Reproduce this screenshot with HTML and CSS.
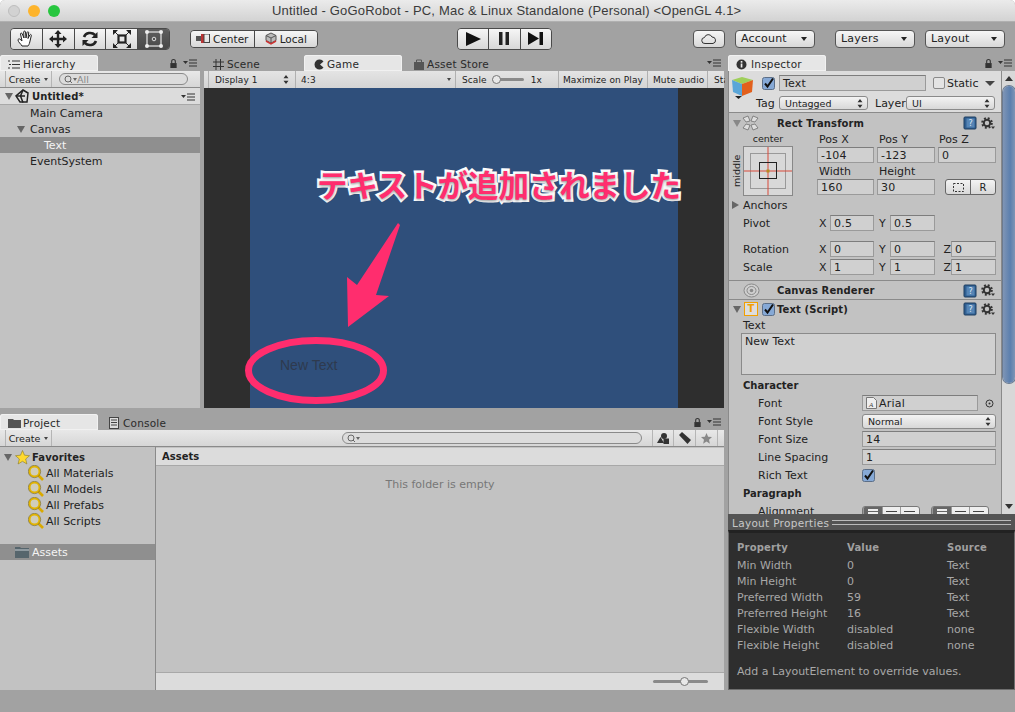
FILE: index.html
```html
<!DOCTYPE html>
<html lang="en">

<head>
    <meta charset="UTF-8">
    <title>Untitled - GoGoRobot</title>
    <link rel="stylesheet" href="styles.css">
</head>

<body>
    <svg class="defs" width="0" height="0">
        <symbol id="lock" viewBox="0 0 10 11"><path d="M3 5V3a2 2 0 0 1 4 0v2" fill="none" stroke="#333" stroke-width="1.2"/><rect x="1.5" y="5" width="7" height="5.5" fill="#333"/></symbol>
        <symbol id="menu" viewBox="0 0 14 8"><path d="M0 2h5L2.500 5z" fill="#333"/><path d="M6 1h8M6 4h8M6 7h8" stroke="#333" stroke-width="1.100"/></symbol>
        <symbol id="help" viewBox="0 0 14 14"><rect x="1" y="1" width="12" height="12" rx="1" fill="#2f5f92" stroke="#1f3f60"/><rect x="3.500" y="2.500" width="8" height="9" fill="#5685b5"/><text x="7.500" y="10" font-size="8" fill="#dce9f5" text-anchor="middle" font-family="DejaVu Sans">?</text></symbol>
        <symbol id="gear" viewBox="0 0 14 13"><circle cx="6" cy="6" r="3.200" fill="none" stroke="#333" stroke-width="2"/><circle cx="6" cy="6" r="4.800" fill="none" stroke="#333" stroke-width="2" stroke-dasharray="1.900 1.900"/><path d="M10 9.500h4l-2 2.500z" fill="#333"/></symbol>
        <symbol id="zoom" viewBox="0 0 16 16"><circle cx="6.500" cy="6.500" r="5" fill="#f3e9a8" fill-opacity=".3" stroke="#e2b400" stroke-width="2"/><path d="M10.500 10.500l4.500 4.500" stroke="#d9a900" stroke-width="2.600"/><circle cx="6.500" cy="6.500" r="6.200" fill="none" stroke="#6b5a10" stroke-width=".5"/></symbol>
        <symbol id="check" viewBox="0 0 13 13"><rect x=".5" y=".5" width="12" height="12" rx="2" fill="#86a9d6" stroke="#5c6f88"/><path d="M3 6.500l2.500 3L11 1.500" fill="none" stroke="#111" stroke-width="2"/></symbol>
        <symbol id="updown" viewBox="0 0 6 9"><path d="M3 0l2.500 3.200h-5zM3 9l2.500-3.200h-5z" fill="#333"/></symbol>
    </svg>

    <div class="window">
        <header class="titlebar">
            <div class="lights">
                <span class="light light-off"></span>
                <span class="light light-min"></span>
                <span class="light light-max"></span>
            </div>
            <div class="title">Untitled - GoGoRobot - PC, Mac &amp; Linux Standalone (Personal) &lt;OpenGL 4.1&gt;</div>
        </header>

        <div class="toolbar">
            <div class="btn-group tools">
                <button class="tool"><svg width="20" height="20" viewBox="0 0 20 20"><path d="M6 17c-1-2-4-4-4-6 0-1 1-1.500 2-.8l2 1.800L4.500 5c0-1.200 1.500-1.200 1.800 0L8 9l-.3-6c0-1.200 1.700-1.200 1.800 0l.5 6 1-5.500c.3-1.100 1.800-.9 1.700.3L12 9.500l1.800-3.500c.5-1 1.900-.5 1.500.6L13.800 13c-.5 2-1 3-1.800 4z" fill="#fff" stroke="#222" stroke-width="1"/></svg></button>
                <button class="tool"><svg width="20" height="20" viewBox="0 0 20 20"><path d="M10 1l3.500 4h-2.300v3.800H15V6.500l4 3.500-4 3.500v-2.300h-3.800V15h2.300L10 19l-3.500-4h2.300v-3.800H5v2.300L1 10l4-3.500v2.300h3.800V5H6.500z" fill="#222"/></svg></button>
                <button class="tool"><svg width="20" height="20" viewBox="0 0 20 20"><path d="M4 8a6.500 6 0 0 1 11-2" fill="none" stroke="#222" stroke-width="2.600"/><path d="M17.500 3v6h-6z" fill="#222"/><path d="M16 12a6.500 6 0 0 1-11 2" fill="none" stroke="#222" stroke-width="2.600"/><path d="M2.500 17v-6h6z" fill="#222"/></svg></button>
                <button class="tool"><svg width="20" height="20" viewBox="0 0 20 20"><rect x="6.500" y="6.500" width="7" height="7" fill="none" stroke="#222" stroke-width="2.200"/><path d="M1 1h5L1 6zM19 1v5l-5-5zM1 19v-5l5 5zM19 19h-5l5-5z" fill="#222"/><path d="M3 3l3 3M17 3l-3 3M3 17l3-3M17 17l-3-3" stroke="#222"/></svg></button>
                <button class="tool tool-on"><svg width="20" height="20" viewBox="0 0 20 20"><rect x="3" y="3" width="14" height="14" fill="none" stroke="#ddd" stroke-width="1.300"/><circle cx="3" cy="3" r="2" fill="#eee"/><circle cx="17" cy="3" r="2" fill="#eee"/><circle cx="3" cy="17" r="2" fill="#eee"/><circle cx="17" cy="17" r="2" fill="#eee"/><circle cx="10" cy="10" r="1.800" fill="none" stroke="#ddd"/></svg></button>
            </div>
            <div class="btn-group pivot">
                <button class="pivot-btn"><svg width="14" height="9" viewBox="0 0 14 9"><rect x="0" y="2" width="5" height="5" fill="#555"/><rect x="5" y="0" width="3" height="9" fill="#b33"/><rect x="8" y="0" width="5.500" height="8.500" fill="none" stroke="#444"/></svg>Center</button>
                <button class="pivot-btn"><svg width="12" height="13" viewBox="0 0 12 13"><path d="M6 1l5 2.500v5L6 11 1 8.500v-5z" fill="#bbb" stroke="#555"/><path d="M1 3.500L6 6l5-2.500M6 6v5" fill="none" stroke="#555"/><path d="M1 9l5 3 5-3" fill="none" stroke="#c33" stroke-width="1.500"/></svg>Local</button>
            </div>
            <div class="btn-group play">
                <button class="play-btn"><svg width="15" height="14" viewBox="0 0 15 14"><path d="M0 0l15 7-15 7z" fill="#111"/></svg></button>
                <button class="play-btn"><svg width="10" height="13" viewBox="0 0 10 13"><path d="M0 0h3.500v13H0zM6.500 0H10v13H6.500z" fill="#222"/></svg></button>
                <button class="play-btn"><svg width="15" height="13" viewBox="0 0 15 13"><path d="M0 0l11 6.500L0 13z" fill="#111"/><path d="M11.500 0H15v13h-3.500z" fill="#111"/></svg></button>
            </div>
            <button class="single cloud"><svg width="16" height="10" viewBox="0 0 16 10"><path d="M4 9.500a3 3 0 0 1-.5-6A4 4 0 0 1 11 3a3.300 3.300 0 0 1 1 6.500z" fill="none" stroke="#333"/></svg></button>
            <button class="single drop account">Account<i class="caret"></i></button>
            <button class="single drop layers">Layers<i class="caret"></i></button>
            <button class="single drop layout">Layout<i class="caret"></i></button>
        </div>

        <div class="workspace">
            <div class="left">
                <div class="top-row">
                    <section class="panel hierarchy">
                        <div class="tabs">
                            <div class="tab tab-on hier-tab"><svg width="12" height="9" viewBox="0 0 12 9"><path d="M0 1h2M4 1h8M1 4.500h2M4 4.500h8M0 8h2M4 8h8" stroke="#333"/></svg>Hierarchy</div>
                            <div class="tab-tools"><svg width="9" height="11"><use href="#lock"/></svg><svg width="14" height="8"><use href="#menu"/></svg></div>
                        </div>
                        <div class="panel-bar">
                            <div class="create">Create<i class="caret caret-small"></i></div>
                            <div class="search search-all"><svg width="13" height="9" viewBox="0 0 13 9"><circle cx="4" cy="4" r="3" fill="none" stroke="#666"/><path d="M6 6l2 2" stroke="#666"/><path d="M9 3h4l-2 3z" fill="#666"/></svg>All</div>
                        </div>
                        <div class="scene-head">
                            <i class="fold"></i>
                            <svg width="15" height="15" viewBox="0 0 15 15"><path d="M8 1l5 3-1 9-7 0-4-6z" fill="none" stroke="#222" stroke-width="1.500"/><path d="M1 7h9M8 1L5.500 7 8 13.500" fill="none" stroke="#222" stroke-width="1.500"/></svg>
                            <b>Untitled*</b>
                            <svg class="scene-menu" width="14" height="8"><use href="#menu"/></svg>
                        </div>
                        <div class="row row-1">Main Camera</div>
                        <div class="row row-0"><i class="fold"></i>Canvas</div>
                        <div class="row row-2 row-on">Text</div>
                        <div class="row row-1">EventSystem</div>
                    </section>

                    <section class="panel game">
                        <div class="tabs">
                            <div class="tab scene-tab"><svg width="11" height="11" viewBox="0 0 11 11"><path d="M3 0v11M7.500 0v11M0 3h11M0 7.500h11" stroke="#333"/></svg>Scene</div>
                            <div class="tab tab-on game-tab"><svg width="12" height="11" viewBox="0 0 12 11"><path d="M10.500 2.500a5 5 0 1 0 0 6L7 5.500z" fill="#333"/></svg>Game</div>
                            <div class="tab store-tab"><svg width="12" height="11" viewBox="0 0 12 11"><rect x="1" y="3" width="10" height="8" fill="#555"/><path d="M3.500 3V1h5v2" fill="none" stroke="#555"/></svg>Asset Store</div>
                            <div class="tab-tools"><svg width="14" height="8"><use href="#menu"/></svg></div>
                        </div>
                        <div class="panel-bar game-bar">
                            <div class="cell cell-display">Display 1<svg width="6" height="9"><use href="#updown"/></svg></div>
                            <div class="cell cell-ratio">4:3<i class="caret caret-small"></i></div>
                            <div class="cell cell-scale">Scale<span class="slider slider-scale"><i></i></span><span>1x</span></div>
                            <div class="cell cell-max">Maximize on Play</div>
                            <div class="cell cell-mute">Mute audio</div>
                            <div class="cell cell-stats">Stats</div>
                        </div>
                        <div class="game-view">
                            <div class="game-side"></div>
                            <div class="game-screen"></div>
                            <div class="game-side"></div>
                            <span class="new-text">New Text</span>
                            <svg class="annotation" width="520" height="320" viewBox="0 0 520 320">
                                <polygon points="144,239 143,189 153,197 194,135 196,137 172,207 185,208" fill="#ff2d6e"/>
                                <ellipse cx="112" cy="282.500" rx="67.500" ry="30" fill="none" stroke="#ff2d6e" stroke-width="7"/>
                            </svg>
                            <div class="callout">テキストが追加されました</div>
                        </div>
                    </section>
                </div>

                <section class="panel project">
                    <div class="tabs">
                        <div class="tab tab-on project-tab"><svg width="13" height="10" viewBox="0 0 13 10"><path d="M0 1h5l1 1h7v8H0z" fill="#555"/></svg>Project</div>
                        <div class="tab console-tab"><svg width="10" height="12" viewBox="0 0 10 12"><rect x=".5" y=".5" width="9" height="11" fill="#ddd" stroke="#444"/><path d="M2 3h6M2 5.500h6M2 8h6" stroke="#444"/></svg>Console</div>
                        <div class="tab-tools"><svg width="9" height="11"><use href="#lock"/></svg><svg width="14" height="8"><use href="#menu"/></svg></div>
                    </div>
                    <div class="panel-bar">
                        <div class="create">Create<i class="caret caret-small"></i></div>
                        <div class="search search-project"><svg width="13" height="9" viewBox="0 0 13 9"><circle cx="4" cy="4" r="3" fill="none" stroke="#666"/><path d="M6 6l2 2" stroke="#666"/><path d="M9 3h4l-2 3z" fill="#666"/></svg></div>
                        <div class="bar-icon"><svg width="12" height="11" viewBox="0 0 12 11"><path d="M0 10l3.500-6L7 10z" fill="#333"/><circle cx="7" cy="3" r="3" fill="#333"/><rect x="6.500" y="5.500" width="5.500" height="5.500" fill="#333"/></svg></div>
                        <div class="bar-icon"><svg width="12" height="12" viewBox="0 0 12 12"><path d="M0 3l3-3 9 8-3.500 4z" fill="#333"/></svg></div>
                        <div class="bar-icon"><svg width="11" height="11" viewBox="0 0 11 11"><path d="M5.500 0l1.600 3.700 3.900.4-3 2.600.9 4-3.400-2.100L2.100 10.700l.9-4-3-2.600 3.900-.4z" fill="#888"/></svg></div>
                    </div>
                    <div class="project-body">
                        <div class="tree">
                            <div class="row fav-row"><i class="fold"></i><svg width="15" height="15" viewBox="0 0 15 15"><path d="M7.500 .5l2 4.700 5 .5-3.800 3.300 1.200 5L7.500 11.300 3.100 14l1.200-5L.5 5.700l5-.5z" fill="#ffd92e" stroke="#8a7a20" stroke-width=".6"/></svg><b>Favorites</b></div>
                            <div class="row search-row"><svg width="16" height="16"><use href="#zoom"/></svg>All Materials</div>
                            <div class="row search-row"><svg width="16" height="16"><use href="#zoom"/></svg>All Models</div>
                            <div class="row search-row"><svg width="16" height="16"><use href="#zoom"/></svg>All Prefabs</div>
                            <div class="row search-row"><svg width="16" height="16"><use href="#zoom"/></svg>All Scripts</div>
                            <div class="row row-on assets-row"><svg width="14" height="12" viewBox="0 0 14 12"><path d="M0 1h5l1 1h8v10H0z" fill="#56656c"/><rect y="3.500" width="14" height="1" fill="#c8d0d4"/></svg>Assets</div>
                        </div>
                        <div class="browser">
                            <div class="browser-head">Assets</div>
                            <div class="browser-empty">This folder is empty</div>
                            <div class="browser-foot"><span class="slider slider-size"><i></i></span></div>
                        </div>
                    </div>
                </section>
            </div>

            <aside class="right">
                <section class="panel inspector">
                    <div class="tabs">
                        <div class="tab tab-on inspector-tab"><svg width="11" height="11" viewBox="0 0 11 11"><circle cx="5.500" cy="5.500" r="5" fill="#333"/><rect x="4.700" y="4.500" width="1.700" height="4" fill="#eee"/><rect x="4.700" y="2" width="1.700" height="1.700" fill="#eee"/></svg>Inspector</div>
                        <div class="tab-tools"><svg width="9" height="11"><use href="#lock"/></svg><svg width="14" height="8"><use href="#menu"/></svg></div>
                    </div>
                    <div class="inspector-body">
                        <div class="inspector-scroll">
                            <div class="object-head">
                                <div class="object-line">
                                    <svg class="cube" width="23" height="24" viewBox="0 0 23 24"><path d="M1 4l10-3 11 3-11 4z" fill="#9fcf5a"/><path d="M1 4l10 4v12L2 16z" fill="#5aa6d8"/><path d="M11 8l11-4-1 12-10 4z" fill="#e2601c"/><path d="M4 20h7l-3.500 3z" fill="#222"/></svg>
                                    <svg width="13" height="13"><use href="#check"/></svg>
                                    <div class="field name-field">Text</div>
                                    <i class="box"></i>
                                    <span class="static-label">Static</span>
                                    <i class="caret caret-big"></i>
                                </div>
                                <div class="object-line tag-line">
                                    <span class="tag-label">Tag</span>
                                    <div class="popup tag-popup">Untagged<svg width="6" height="9"><use href="#updown"/></svg></div>
                                    <span class="layer-label">Layer</span>
                                    <div class="popup layer-popup">UI<svg width="6" height="9"><use href="#updown"/></svg></div>
                                </div>
                            </div>

                            <div class="comp-head comp-rect">
                                <i class="fold fold-light"></i>
                                <svg class="comp-icon" width="17" height="16" viewBox="0 0 17 16"><path d="M1 3l5-2 2 5-4 1zM16 3l-5-2-2 5 4 1zM1 13l5 2 2-5-4-1zM16 13l-5 2-2-5 4-1z" fill="#dedede" stroke="#707070" stroke-width=".8"/></svg>
                                <b>Rect Transform</b>
                                <svg class="help" width="14" height="14"><use href="#help"/></svg>
                                <svg class="gear" width="14" height="13"><use href="#gear"/></svg>
                            </div>
                            <div class="rect-grid">
                                <div class="anchor-col">
                                    <div class="anchor-top">center</div>
                                    <div class="anchor-wrap">
                                        <span class="anchor-side">middle</span>
                                        <svg class="anchor-box" width="50" height="50" viewBox="0 0 50 50"><rect x=".5" y=".5" width="49" height="49" fill="#d8d8d8" stroke="#888"/><rect x="7.500" y="7.500" width="35" height="35" fill="none" stroke="#999"/><path d="M25 1v48M1 25h48" stroke="#d84a3a"/><rect x="16.500" y="16.500" width="17" height="16" fill="none" stroke="#222"/><rect x="23.500" y="23.500" width="3" height="3" fill="#b88a20"/></svg>
                                    </div>
                                </div>
                                <div class="pos-col">
                                    <div class="triple triple-head"><span>Pos X</span><span>Pos Y</span><span>Pos Z</span></div>
                                    <div class="triple"><div class="field">-104</div><div class="field">-123</div><div class="field">0</div></div>
                                    <div class="triple triple-head"><span>Width</span><span>Height</span></div>
                                    <div class="triple"><div class="field">160</div><div class="field">30</div>
                                        <div class="mini-btns"><span><svg width="11" height="9" viewBox="0 0 11 9"><rect x=".5" y=".5" width="10" height="8" fill="none" stroke="#333" stroke-dasharray="2 1.500"/></svg></span><span>R</span></div>
                                    </div>
                                </div>
                            </div>
                            <div class="prop prop-anchors"><i class="fold fold-closed"></i>Anchors</div>
                            <div class="prop prop-xyz"><span class="prop-name">Pivot</span><em>X</em><div class="field">0.5</div><em>Y</em><div class="field">0.5</div></div>
                            <div class="prop prop-xyz prop-gap"><span class="prop-name">Rotation</span><em>X</em><div class="field">0</div><em>Y</em><div class="field">0</div><em>Z</em><div class="field">0</div></div>
                            <div class="prop prop-xyz"><span class="prop-name">Scale</span><em>X</em><div class="field">1</div><em>Y</em><div class="field">1</div><em>Z</em><div class="field">1</div></div>

                            <div class="comp-head comp-canvas">
                                <svg class="comp-icon" width="17" height="15" viewBox="0 0 17 15"><ellipse cx="8.500" cy="7.500" rx="7.500" ry="6.500" fill="#cfcfcf" stroke="#8a8a8a"/><ellipse cx="8.500" cy="7.500" rx="4.500" ry="4" fill="none" stroke="#8a8a8a"/><circle cx="8.500" cy="7.500" r="1.800" fill="#8a8a8a"/></svg>
                                <b>Canvas Renderer</b>
                                <svg class="help" width="14" height="14"><use href="#help"/></svg>
                                <svg class="gear" width="14" height="13"><use href="#gear"/></svg>
                            </div>
                            <div class="comp-head comp-text">
                                <i class="fold"></i>
                                <span class="t-icon">T</span>
                                <svg width="13" height="13"><use href="#check"/></svg>
                                <b>Text (Script)</b>
                                <svg class="help" width="14" height="14"><use href="#help"/></svg>
                                <svg class="gear" width="14" height="13"><use href="#gear"/></svg>
                            </div>
                            <div class="prop text-label">Text</div>
                            <div class="text-area">New Text</div>
                            <div class="prop group-label">Character</div>
                            <div class="prop sub"><span class="sub-name">Font</span><div class="field font-field"><svg width="11" height="12" viewBox="0 0 11 12"><path d="M.5.500h7l3 3v8H.5z" fill="#eee" stroke="#777"/><text x="3" y="10" font-size="7" font-style="italic" font-family="Liberation Serif" fill="#444">A</text></svg>Arial</div><svg class="picker" width="9" height="9" viewBox="0 0 9 9"><circle cx="4.500" cy="4.500" r="3.500" fill="none" stroke="#333"/><circle cx="4.500" cy="4.500" r="1" fill="#333"/></svg></div>
                            <div class="prop sub"><span class="sub-name">Font Style</span><div class="popup style-popup">Normal<svg width="6" height="9"><use href="#updown"/></svg></div></div>
                            <div class="prop sub"><span class="sub-name">Font Size</span><div class="field wide-field">14</div></div>
                            <div class="prop sub"><span class="sub-name">Line Spacing</span><div class="field wide-field">1</div></div>
                            <div class="prop sub"><span class="sub-name">Rich Text</span><svg width="13" height="13"><use href="#check"/></svg></div>
                            <div class="prop group-label group-para">Paragraph</div>
                            <div class="prop sub"><span class="sub-name">Alignment</span>
                                <div class="align-group"><span class="align-on"></span><span></span><span></span></div>
                                <div class="align-group align-second"><span class="align-on"></span><span></span><span></span></div>
                            </div>
                        </div>
                        <div class="scrollbar">
                            <i class="scroll-up"></i>
                            <div class="scroll-thumb"></div>
                            <i class="scroll-down"></i>
                        </div>
                    </div>
                    <div class="layout-head"><span>Layout Properties</span><i></i></div>
                    <div class="layout-body">
                        <div class="layout-row layout-title"><span>Property</span><span>Value</span><span>Source</span></div>
                        <div class="layout-row"><span>Min Width</span><span>0</span><span>Text</span></div>
                        <div class="layout-row"><span>Min Height</span><span>0</span><span>Text</span></div>
                        <div class="layout-row"><span>Preferred Width</span><span>59</span><span>Text</span></div>
                        <div class="layout-row"><span>Preferred Height</span><span>16</span><span>Text</span></div>
                        <div class="layout-row"><span>Flexible Width</span><span>disabled</span><span>none</span></div>
                        <div class="layout-row"><span>Flexible Height</span><span>disabled</span><span>none</span></div>
                        <p class="layout-note">Add a LayoutElement to override values.</p>
                    </div>
                </section>
            </aside>
        </div>
        <div class="statusbar"></div>
    </div>
</body>

</html>
```
FILE: styles.css
```css
* {
    box-sizing: border-box;
}

body {
    margin: 0;
    background: #fff;
    font-family: "DejaVu Sans", sans-serif;
    font-size: 11px;
    color: #222;
    overflow: hidden;
}

.defs {
    position: absolute;
}

i, em {
    font-style: normal;
}

b {
    font-size: 10px;
    letter-spacing: .1px;
}

button {
    font-family: inherit;
    padding: 0;
}

.window {
    width: 1015px;
    height: 712px;
    background: #a2a2a2;
    border-radius: 5px 5px 0 0;
    overflow: hidden;
}

/* title bar */
.titlebar {
    height: 22px;
    display: flex;
    align-items: center;
    background: linear-gradient(#ebebeb, #d3d3d3);
    border-bottom: 1px solid #b0b0b0;
}

.lights {
    display: flex;
    gap: 8px;
    padding-left: 8px;
    width: 272px;
}

.light {
    width: 12px;
    height: 12px;
    border-radius: 50%;
}

.light-off {
    background: #d2d2d2;
    border: 1px solid #bdbdbd;
}

.light-min {
    background: #fdb42c;
}

.light-max {
    background: #27c63f;
}

.title {
    font-family: "Liberation Sans", sans-serif;
    font-size: 13px;
    color: #3a3a3a;
    white-space: nowrap;
    letter-spacing: .19px;
}

/* main toolbar */
.toolbar {
    height: 32px;
    display: flex;
    align-items: center;
    padding: 1px 0 0 10px;
}

.btn-group {
    display: flex;
    border: 1px solid #4a4a4a;
    border-radius: 4px;
    overflow: hidden;
    flex: none;
}

.btn-group button,
.single {
    border: 0;
    background: linear-gradient(#f6f6f6, #d8d8d8);
    display: flex;
    align-items: center;
    justify-content: center;
    color: #222;
}

.btn-group button {
    flex: 1;
    min-width: 0;
}

.btn-group button + button {
    border-left: 1px solid #4a4a4a;
}

.tools {
    width: 160px;
    height: 22px;
}

.btn-group .tool-on {
    background: linear-gradient(#5f5f5f, #484848);
}

.pivot {
    width: 128px;
    height: 18px;
    margin-left: 20px;
}

.pivot-btn {
    gap: 3px;
    font-size: 10.500px;
}

.play {
    width: 95px;
    height: 22px;
    margin-left: 139px;
}

.single {
    height: 18px;
    border: 1px solid #555;
    border-radius: 4px;
    font-size: 11px;
    flex: none;
}

.cloud {
    width: 32px;
    margin-left: 141px;
}

.drop {
    width: 80px;
    justify-content: space-between;
    padding: 0 7px 0 5px;
    letter-spacing: .2px;
}

.account {
    margin-left: 10px;
}

.layers {
    margin-left: 20px;
}

.layout {
    margin-left: 10px;
}

.caret {
    width: 0;
    height: 0;
    border-left: 3px solid transparent;
    border-right: 3px solid transparent;
    border-top: 4px solid #222;
}

.caret-small {
    border-left-width: 2px;
    border-right-width: 2px;
    border-top-width: 3px;
    border-top-color: #444;
}

.caret-big {
    border-left-width: 5px;
    border-right-width: 5px;
    border-top-width: 5px;
    border-top-color: #444;
}

/* docked panels */
.workspace {
    height: 636px;
    display: flex;
    gap: 4px;
}

.left {
    width: 724px;
    display: flex;
    flex-direction: column;
    gap: 5px;
}

.top-row {
    height: 354px;
    display: flex;
    gap: 4px;
}

.panel {
    display: flex;
    flex-direction: column;
    min-width: 0;
}

.hierarchy {
    width: 200px;
    background: #c2c2c2;
}

.game {
    width: 520px;
}

.project {
    height: 277px;
}

.right {
    width: 287px;
}

.tabs {
    height: 17px;
    flex: none;
    display: flex;
    align-items: flex-end;
    background: #a2a2a2;
    position: relative;
}

.tab {
    height: 16px;
    width: 98px;
    display: flex;
    align-items: center;
    gap: 4px;
    padding: 2px 0 0 8px;
    font-size: 10.500px;
    letter-spacing: .2px;
    color: #2a2a2a;
}

.tab-on {
    background: #e6e6e6;
    border-radius: 3px 3px 0 0;
    box-shadow: inset 0 0 0 1px #f1f1f1;
}

.tab-tools {
    margin-left: auto;
    height: 16px;
    display: flex;
    align-items: center;
    gap: 5px;
    padding-right: 3px;
}

.hier-tab {
    gap: 3px;
}

.project-tab {
    gap: 2px;
}

.scene-tab {
    margin-left: 5px;
    width: 95px;
    padding-left: 4px;
    gap: 3px;
}

.game-tab {
    padding-left: 9px;
    gap: 2px;
}

.store-tab {
    margin-left: 3px;
    width: 90px;
    gap: 2px;
}

.console-tab {
    margin-left: 3px;
}

.panel-bar {
    height: 17px;
    flex: none;
    display: flex;
    align-items: center;
    background: linear-gradient(#e8e8e8, #d6d6d6);
    border-bottom: 1px solid #8a8a8a;
    font-size: 9.500px;
}

.create {
    width: 47px;
    height: 100%;
    margin-left: 5px;
    border-left: 1px solid #b5b5b5;
    border-right: 1px solid #b5b5b5;
    display: flex;
    align-items: center;
    justify-content: center;
    gap: 4px;
}

.search {
    height: 12px;
    border: 1px solid #8a8a8a;
    border-radius: 7px;
    background: #dcdcdc;
    display: flex;
    align-items: center;
    color: #888;
    padding-left: 4px;
}

.search-all {
    width: 129px;
    margin-left: 7px;
}

.search-project {
    width: 300px;
    margin-left: 290px;
}

.bar-icon {
    width: 22px;
    height: 100%;
    border-right: 1px solid #b5b5b5;
    display: flex;
    align-items: center;
    justify-content: center;
}

.bar-icon:nth-child(3) {
    margin-left: 10px;
    border-left: 1px solid #b5b5b5;
}

.scene-head {
    height: 17px;
    display: flex;
    align-items: center;
    background: #dcdcdc;
    border-bottom: 1px solid #a8a8a8;
    padding: 1px 0 0 5px;
    gap: 2px;
}

.scene-menu {
    margin-left: auto;
    margin-right: 5px;
}

.fold {
    width: 0;
    height: 0;
    border-left: 4px solid transparent;
    border-right: 4px solid transparent;
    border-top: 7px solid #666;
}

.fold-light {
    border-top-color: #888;
}

.fold-closed {
    border-top: 4px solid transparent;
    border-bottom: 4px solid transparent;
    border-left: 7px solid #666;
    border-right: 0;
    margin: 0 4px 0 -11px;
}

.row {
    height: 16px;
    display: flex;
    align-items: center;
    white-space: nowrap;
}

.row-0 {
    padding-left: 17px;
    gap: 5px;
}

.row-1 {
    padding-left: 30px;
}

.row-2 {
    padding-left: 44px;
}

.row-on {
    background: #8f8f8f;
    color: #f4f4f4;
}

/* game view */
.game-bar {
    background: linear-gradient(#e4e4e4, #d4d4d4);
    border-bottom: 0;
    font-size: 9px;
    letter-spacing: .1px;
}

.cell {
    height: 100%;
    display: flex;
    align-items: center;
    border-right: 1px solid #b0b0b0;
    white-space: nowrap;
    padding-left: 5px;
    overflow: hidden;
    flex: none;
}

.cell-display {
    width: 88px;
    margin-left: 4px;
    border-left: 1px solid #b0b0b0;
    padding-left: 6px;
    justify-content: space-between;
    padding-right: 6px;
}

.cell-ratio {
    width: 160px;
    justify-content: space-between;
    padding-right: 4px;
}

.cell-scale {
    width: 103px;
    padding-left: 6px;
}

.cell-max {
    width: 89px;
    padding-left: 4px;
}

.cell-mute {
    width: 60px;
}

.cell-stats {
    width: 17px;
    border-right: 0;
    padding-left: 6px;
}

.slider {
    display: block;
    height: 3px;
    border-radius: 2px;
    background: #8a8a8a;
    position: relative;
}

.slider i {
    position: absolute;
    top: -3px;
    width: 9px;
    height: 9px;
    border-radius: 50%;
    background: #e8e8e8;
    border: 1px solid #777;
}

.slider-scale {
    width: 32px;
    margin: 0 7px 0 5px;
}

.game-view {
    height: 320px;
    display: flex;
    position: relative;
    overflow: hidden;
}

.game-side {
    width: 46px;
    background: #2e2e2e;
}

.game-screen {
    flex: 1;
    background: #2f4f7b;
}

.new-text {
    position: absolute;
    left: 76px;
    top: 269px;
    font-family: "Liberation Sans", sans-serif;
    font-size: 14px;
    color: #2e3a4e;
}

.annotation {
    position: absolute;
    left: 0;
    top: 0;
}

.callout {
    position: absolute;
    left: 113px;
    top: 74px;
    font-family: "Noto Sans CJK JP", sans-serif;
    font-size: 30.400px;
    line-height: 44px;
    font-weight: 700;
    color: #ff2d6e;
    white-space: nowrap;
    -webkit-text-stroke: 5px #fff;
    paint-order: stroke fill;
    text-shadow: 0 1px 3px rgba(0, 0, 0, .45);
}

/* project */
.project-body {
    flex: 1;
    display: flex;
    min-height: 0;
}

.tree {
    width: 156px;
    background: #c2c2c2;
    border-right: 1px solid #8a8a8a;
    padding-top: 2px;
}

.fav-row {
    padding-left: 4px;
    gap: 3px;
}

.fav-row b {
    margin-left: -1px;
}

.search-row {
    padding-left: 28px;
    gap: 2px;
}

.assets-row {
    margin-top: 15px;
    padding-left: 15px;
    gap: 3px;
}

.browser {
    flex: 1;
    background: #c2c2c2;
    display: flex;
    flex-direction: column;
    padding-top: 1px;
}

.browser-head {
    height: 18px;
    background: #dcdcdc;
    border-bottom: 1px solid #a8a8a8;
    font-weight: 700;
    font-size: 10px;
    padding: 3px 0 0 6px;
}

.browser-empty {
    flex: 1;
    text-align: center;
    padding-top: 12px;
    color: #777;
}

.browser-foot {
    height: 18px;
    background: #dcdcdc;
    border-top: 1px solid #a8a8a8;
    display: flex;
    align-items: center;
    justify-content: flex-end;
    padding-right: 16px;
}

.slider-size {
    width: 55px;
}

.slider-size i {
    left: 27px;
}

/* inspector */
.inspector {
    height: 636px;
}

.inspector-body {
    height: 444px;
    display: flex;
    background: #c2c2c2;
    overflow: hidden;
}

.inspector-scroll {
    width: 273px;
    flex: none;
    border-left: 1px solid #8a8a8a;
}

.object-head {
    height: 42px;
    background: #dcdcdc;
    border-bottom: 1px solid #8a8a8a;
    padding-top: 4px;
    position: relative;
}

.object-line {
    height: 16px;
    display: flex;
    align-items: center;
    padding-left: 33px;
}

.cube {
    position: absolute;
    left: 2px;
    top: 5px;
}

.name-field {
    width: 147px;
    margin-left: 4px;
}

.box {
    width: 12px;
    height: 12px;
    border: 1px solid #8a8a8a;
    border-radius: 2px;
    background: #e4e4e4;
    margin-left: 7px;
}

.static-label {
    margin-left: 2px;
    width: 38px;
}

.tag-line {
    margin-top: 4px;
    padding-left: 27px;
}

.tag-label {
    width: 23px;
}

.popup {
    height: 14px;
    border: 1px solid #8a8a8a;
    border-radius: 3px;
    background: linear-gradient(#f3f3f3, #d8d8d8);
    display: flex;
    align-items: center;
    justify-content: space-between;
    padding: 0 4px 0 5px;
    font-size: 9.500px;
}

.tag-popup {
    width: 89px;
}

.layer-label {
    margin-left: 7px;
    width: 31px;
}

.layer-popup {
    width: 89px;
}

.field {
    height: 16px;
    background: #d0d0d0;
    border: 1px solid #9a9a9a;
    border-top-color: #7d7d7d;
    display: flex;
    align-items: center;
    padding-left: 3px;
    white-space: nowrap;
    letter-spacing: .2px;
    flex: none;
}

.comp-head {
    display: flex;
    align-items: center;
    position: relative;
    padding-left: 4px;
}

.comp-head b {
    position: absolute;
    left: 48px;
}

.comp-head .help {
    position: absolute;
    left: 234px;
}

.comp-head .gear {
    position: absolute;
    left: 252px;
}

.comp-rect {
    height: 19px;
    padding-top: 1px;
    gap: 1px;
}

.comp-canvas {
    height: 19px;
    border-top: 1px solid #8a8a8a;
    padding: 1px 0 0 14px;
    margin-top: 4px;
}

.comp-text {
    height: 19px;
    border-top: 1px solid #8a8a8a;
    gap: 3px;
}

.t-icon {
    width: 14px;
    height: 14px;
    margin-right: 1px;
    border: 1px solid #f2a000;
    color: #f2a000;
    font-weight: 700;
    font-size: 10px;
    line-height: 12px;
    text-align: center;
    background: #ddd;
}

.rect-grid {
    height: 64px;
    display: flex;
}

.anchor-col {
    width: 88px;
    padding-left: 2px;
}

.anchor-top {
    height: 14px;
    font-size: 9.500px;
    text-align: center;
    line-height: 14px;
    width: 74px;
}

.anchor-wrap {
    display: flex;
}

.anchor-side {
    writing-mode: vertical-rl;
    transform: rotate(180deg);
    font-size: 9.500px;
    width: 12px;
    height: 50px;
    text-align: center;
}

.pos-col {
    display: flex;
    flex-direction: column;
}

.triple {
    display: flex;
    gap: 3px;
}

.triple .field {
    width: 58px;
}

.triple .field:first-child {
    width: 57px;
}

.triple-head {
    height: 15px;
    align-items: center;
    padding-left: 2px;
    gap: 0;
}

.triple-head span {
    width: 60px;
}

.triple + .triple-head {
    height: 16px;
}

.mini-btns {
    width: 51px;
    height: 16px;
    margin-left: 7px;
    border: 1px solid #666;
    border-radius: 3px;
    display: flex;
    background: linear-gradient(#f3f3f3, #d8d8d8);
    overflow: hidden;
}

.mini-btns span {
    flex: 1;
    display: flex;
    align-items: center;
    justify-content: center;
    font-size: 10px;
}

.mini-btns span + span {
    border-left: 1px solid #666;
}

.prop {
    height: 18px;
    display: flex;
    align-items: center;
    padding-left: 14px;
    white-space: nowrap;
}

.prop-name {
    width: 76px;
}

.prop-xyz em {
    width: 11px;
}

.prop-xyz em:nth-of-type(3) {
    text-align: right;
}

.prop-xyz .field {
    width: 45px;
    margin-right: 5px;
}

.prop-xyz em:first-of-type + .field {
    width: 44px;
}

.prop-xyz .field:last-child {
    margin-right: 0;
}

.prop-gap {
    margin-top: 8px;
}

.text-label {
    height: 15px;
}

.text-area {
    width: 255px;
    height: 42px;
    margin-left: 12px;
    background: #d0d0d0;
    border: 1px solid #8a8a8a;
    padding: 1px 3px;
}

.group-label {
    font-weight: 700;
    font-size: 10px;
    margin-top: 1px;
}

.group-para {
    margin-top: 0;
}

.sub {
    padding-left: 29px;
}

.sub-name {
    width: 104px;
}

.font-field {
    width: 116px;
    gap: 2px;
}

.picker {
    margin-left: 7px;
}

.style-popup {
    width: 134px;
    height: 15px;
}

.wide-field {
    width: 134px;
}

.align-group {
    display: flex;
    width: 58px;
    height: 14px;
    border: 1px solid #777;
    border-radius: 3px;
    overflow: hidden;
    margin-top: 4px;
    background: #eee;
}

.align-group span {
    flex: 1;
    border-left: 1px solid #999;
    background: repeating-linear-gradient(#eee 0 2px, #444 2px 3px) 3px 2px / 11px 8px no-repeat;
}

.align-group .align-on {
    background: #666 repeating-linear-gradient(#eee 0 2px, transparent 2px 3px) 4px 2px / 10px 8px no-repeat;
}

.align-second {
    margin-left: 11px;
}

.scrollbar {
    width: 14px;
    flex: none;
    background: #d8d8d8;
    border-left: 1px solid #8a8a8a;
    display: flex;
    flex-direction: column;
    align-items: center;
}

.scroll-up,
.scroll-down {
    width: 0;
    height: 0;
    margin: 5px 0;
    border-left: 4px solid transparent;
    border-right: 4px solid transparent;
}

.scroll-up {
    border-bottom: 5px solid #333;
}

.scroll-down {
    border-top: 5px solid #333;
    margin-top: auto;
}

.scroll-thumb {
    width: 12px;
    height: 297px;
    border-radius: 6px;
    background: linear-gradient(90deg, #7f95b5, #5b7fae 60%, #7f95b5);
    box-shadow: 0 0 0 1px #6a7a90;
}

.layout-head {
    height: 16px;
    background: #545454;
    color: #c8c8c8;
    display: flex;
    align-items: center;
    padding: 1px 0 0 4px;
    gap: 3px;
    font-size: 10.500px;
    letter-spacing: .3px;
    flex: none;
}

.layout-head i {
    flex: 1;
    height: 5px;
    margin-right: 4px;
    border-top: 1px solid #bbb;
    border-bottom: 1px solid #bbb;
}

.layout-body {
    height: 160px;
    background: #2e2e2e;
    border: 1px solid #6e6e6e;
    border-top: 3px solid #222;
    padding: 5px 8px 0;
    color: #a8a8a8;
}

.layout-row {
    height: 16px;
    display: flex;
    align-items: center;
}

.layout-row span:nth-child(1) {
    width: 110px;
}

.layout-row span:nth-child(2) {
    width: 100px;
}

.layout-title {
    height: 19px;
    font-size: 10px;
    font-weight: 700;
    letter-spacing: .2px;
    color: #a0a0a0;
}

.layout-note {
    margin: 12px 0 0;
}

.statusbar {
    height: 22px;
}
```
